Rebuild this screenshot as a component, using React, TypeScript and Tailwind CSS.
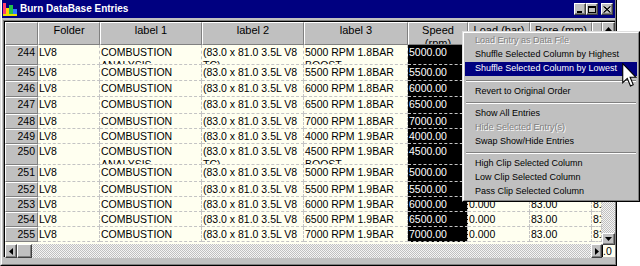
import React from 'react';

type Row = { n: number; speed: string; rpm: string; bar: string; h: string; wrap?: boolean };

const rows: Row[] = [
  { n: 244, speed: '5000.00', rpm: '5000', bar: '1.8', h: 'h-[20px]', wrap: true },
  { n: 245, speed: '5500.00', rpm: '5500', bar: '1.8', h: 'h-[16px]' },
  { n: 246, speed: '6000.00', rpm: '6000', bar: '1.8', h: 'h-[16px]' },
  { n: 247, speed: '6500.00', rpm: '6500', bar: '1.8', h: 'h-[17px]' },
  { n: 248, speed: '7000.00', rpm: '7000', bar: '1.8', h: 'h-[15px]' },
  { n: 249, speed: '4000.00', rpm: '4000', bar: '1.9', h: 'h-[15px]' },
  { n: 250, speed: '4500.00', rpm: '4500', bar: '1.9', h: 'h-[21px]', wrap: true },
  { n: 251, speed: '5000.00', rpm: '5000', bar: '1.9', h: 'h-[17px]' },
  { n: 252, speed: '5500.00', rpm: '5500', bar: '1.9', h: 'h-[15px]' },
  { n: 253, speed: '6000.00', rpm: '6000', bar: '1.9', h: 'h-[15px]' },
  { n: 254, speed: '6500.00', rpm: '6500', bar: '1.9', h: 'h-[15px]' },
  { n: 255, speed: '7000.00', rpm: '7000', bar: '1.9', h: 'h-[15px]' },
];

const raised = 'border border-t-white border-l-white border-r-[#404040] border-b-[#404040] shadow-[inset_-1px_-1px_0_#808080]';
const checker = 'bg-[repeating-conic-gradient(#c0c0c0_0%_25%,#f4f4f4_0%_50%)] bg-[length:2px_2px]';

function Cell({ w, dark, children }: { w: string; dark?: boolean; children?: React.ReactNode }) {
  return (
    <div
      className={`${w} shrink-0 overflow-hidden border-r border-b border-dashed border-[#c4c4c4] pl-px pt-px leading-[13px] ${
        dark ? 'bg-black text-white' : 'text-black'
      }`}
    >
      {children}
    </div>
  );
}

function Head({ w, children }: { w: string; children?: React.ReactNode }) {
  return (
    <div className={`${w} shrink-0 overflow-hidden bg-[#c0c0c0] border border-t-white border-l-white border-r-[#808080] border-b-[#808080] text-center pt-px leading-[13px] text-[11px]`}>
      {children}
    </div>
  );
}

function Arrow({ dir }: { dir: 'up' | 'down' | 'left' | 'right' }) {
  const pts = {
    up: '0,4 3.5,0 7,4',
    down: '0,0 3.5,4 7,0',
    left: '4,0 0,3.5 4,7',
    right: '0,0 4,3.5 0,7',
  }[dir];
  const vertical = dir === 'up' || dir === 'down';
  return (
    <svg width={vertical ? 7 : 4} height={vertical ? 4 : 7} viewBox={vertical ? '0 0 7 4' : '0 0 4 7'}>
      <polygon points={pts} fill="#000" />
    </svg>
  );
}

function TitleButton({ kind }: { kind: 'min' | 'max' | 'close' }) {
  return (
    <div className={`w-[12px] h-[12px] bg-[#c0c0c0] ${raised} flex items-center justify-center`}>
      {kind === 'min' && <div className="w-[5px] h-[2px] bg-black mt-[5px] -ml-px" />}
      {kind === 'max' && <div className="w-[8px] h-[7px] border border-black border-t-2 -ml-px" />}
      {kind === 'close' && (
        <svg width="8" height="7" viewBox="0 0 8 7" className="-ml-px">
          <path d="M0.5 0.5 L7 6.5 M1.5 0.5 L7.5 6.5 M7 0.5 L0.5 6.5 M7.5 0.5 L1 6.5" stroke="#000" strokeWidth="1" />
        </svg>
      )}
    </div>
  );
}

const menu: ({ label: string; disabled?: boolean; active?: boolean } | { sep: string })[] = [
  { label: 'Load Entry as Data File', disabled: true },
  { label: 'Shuffle Selected Column by Highest' },
  { label: 'Shuffle Selected Column by Lowest', active: true },
  { sep: 'h-[9px]' },
  { label: 'Revert to Original Order' },
  { sep: 'h-[8px]' },
  { label: 'Show All Entries' },
  { label: 'Hide Selected Entry(s)', disabled: true },
  { label: 'Swap Show/Hide Entries' },
  { sep: 'h-[8px]' },
  { label: 'High Clip Selected Column' },
  { label: 'Low Clip Selected Column' },
  { label: 'Pass Clip Selected Column' },
];

export default function App() {
  return (
    <div className="relative w-[640px] h-[266px] overflow-hidden bg-white font-['Liberation_Sans',Arial,sans-serif] text-[10.5px] text-black">
      {/* window */}
      <div className="w-[617px] h-[266px] bg-[#c0c0c0] border-l border-r border-b border-l-[#dfdfdf] border-r-black border-b-black">
        <div className="h-full border-l border-r border-b border-l-white border-r-[#808080] border-b-[#808080] flex flex-col">
          {/* title bar */}
          <div className="h-[18px] shrink-0 bg-[#000080] flex items-center pl-px pr-[2px]">
            <svg width="14" height="14" viewBox="0 0 14 14">
              <rect x="0" y="1" width="3" height="13" fill="#ff3c6e" />
              <rect x="3" y="6" width="3" height="8" fill="#ffd200" />
              <rect x="6" y="3" width="4" height="11" fill="#21c24a" />
              <rect x="10" y="7" width="4" height="7" fill="#2f7cff" />
              <rect x="0" y="12" width="14" height="2" fill="#e8e000" />
            </svg>
            <span className="ml-[3px] text-white font-bold text-[10px] leading-none">Burn DataBase Entries</span>
            <div className="ml-auto flex items-center">
              <TitleButton kind="min" />
              <TitleButton kind="max" />
              <div className="w-[3px]" />
              <TitleButton kind="close" />
            </div>
          </div>

          {/* grid */}
          <div className="pl-px pt-[2px]">
            <div className="border-t border-l border-[#808080]">
              <div className="border-t border-l border-black flex h-[236px]">
                <div className="w-[597px] flex flex-col bg-[#fffff0]">
                  <div className="flex h-[23px] shrink-0">
                    <Head w="w-[33px]" />
                    <Head w="w-[62px]">Folder</Head>
                    <Head w="w-[102px]">label 1</Head>
                    <Head w="w-[102px]">label 2</Head>
                    <Head w="w-[104px]">label 3</Head>
                    <Head w="w-[60px]">
                      Speed
                      <br />
                      (rpm)
                    </Head>
                    <Head w="w-[62px]">Load (bar)</Head>
                    <Head w="w-[62px]">Bore (mm)</Head>
                    <Head w="w-[10px]" />
                  </div>
                  {rows.map((r) => (
                    <div key={r.n} className={`flex shrink-0 ${r.h}`}>
                      <div className="w-[33px] shrink-0 overflow-hidden bg-[#c0c0c0] border border-t-white border-l-white border-r-[#808080] border-b-[#808080] text-right pr-[2px] leading-[13px]">
                        {r.n}
                      </div>
                      <Cell w="w-[62px]">LV8</Cell>
                      <Cell w="w-[102px]">{r.wrap ? 'COMBUSTION ANALYSIS' : 'COMBUSTION'}</Cell>
                      <Cell w="w-[102px]">{r.wrap ? '(83.0 x 81.0 3.5L V8 TC)' : '(83.0 x 81.0 3.5L V8'}</Cell>
                      <Cell w="w-[104px]">
                        {r.rpm} RPM {r.bar}BAR{r.wrap ? ' BOOST' : ''}
                      </Cell>
                      <Cell w="w-[60px]" dark>
                        {r.speed}
                      </Cell>
                      <Cell w="w-[62px]">0.000</Cell>
                      <Cell w="w-[62px]">83.00</Cell>
                      <Cell w="w-[10px]">81</Cell>
                    </div>
                  ))}
                  {/* horizontal scrollbar */}
                  <div className="flex-1 flex items-end pt-[2px]">
                    <div className={`flex h-[14px] w-full ${checker}`}>
                      <div className={`w-[12px] bg-[#c0c0c0] ${raised} flex items-center justify-center`}>
                        <Arrow dir="left" />
                      </div>
                      <div className={`w-[15px] bg-[#c0c0c0] ${raised}`} />
                      <div className="flex-1" />
                      <div className={`w-[11px] bg-[#c0c0c0] ${raised} flex items-center justify-center`}>
                        <Arrow dir="right" />
                      </div>
                    </div>
                  </div>
                </div>
                {/* vertical scrollbar */}
                <div className="w-[13px] flex flex-col">
                  <div className={`h-[13px] bg-[#c0c0c0] ${raised} flex items-center justify-center`}>
                    <Arrow dir="up" />
                  </div>
                  <div className={`flex-1 ${checker}`} />
                  <div className={`h-[12px] bg-[#c0c0c0] ${raised} flex items-center justify-center`}>
                    <Arrow dir="down" />
                  </div>
                  <div className="h-[12px] bg-[#fffff0] border-l border-black overflow-hidden leading-[12px] text-[10.5px]">
                    .0
                  </div>
                </div>
              </div>
            </div>
          </div>
        </div>
      </div>

      {/* context menu */}
      <div className="absolute left-[462px] top-[31px] w-[178px] h-[171px] bg-[#c0c0c0] border border-t-[#dfdfdf] border-l-[#dfdfdf] border-r-black border-b-black">
        <div className="h-full border border-t-white border-l-white border-r-[#808080] border-b-[#808080] p-px flex flex-col text-[9px]">
          {menu.map((m, i) =>
            'sep' in m ? (
              <div key={i} className={`${m.sep} flex items-center px-px`}>
                <div className="w-full border-t border-t-[#808080] border-b border-b-white" />
              </div>
            ) : (
              <div
                key={i}
                className={`h-[14px] shrink-0 flex items-center pl-[10px] whitespace-nowrap ${
                  m.active ? 'bg-[#000080] text-white' : m.disabled ? 'text-[#808080] [text-shadow:1px_1px_0_#fff]' : 'text-black'
                }`}
              >
                {m.label}
              </div>
            )
          )}
        </div>
      </div>

      {/* mouse pointer */}
      <svg className="absolute left-[622px] top-[63px]" width="15" height="24" viewBox="0 0 12 19.5">
        <path d="M0.5 0.5 L0.5 16 L4.2 12.5 L6.8 18.6 L9 17.6 L6.5 11.6 L11.3 11.6 Z" fill="#fff" stroke="#000" strokeWidth="0.9" strokeLinejoin="miter" />
      </svg>
    </div>
  );
}
